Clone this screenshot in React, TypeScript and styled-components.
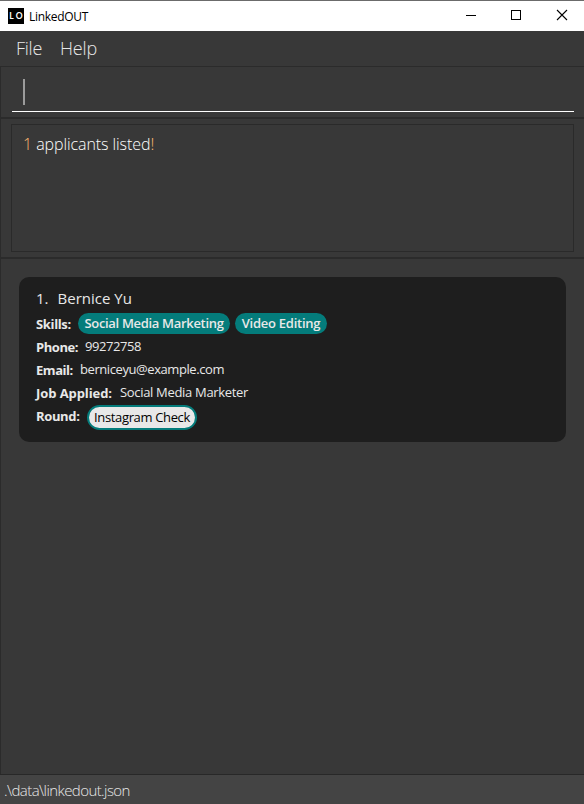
import React from "react";
import styled, { createGlobalStyle } from "styled-components";

const GlobalStyle = createGlobalStyle`
  * { box-sizing: border-box; }
  html, body { margin: 0; padding: 0; overflow: hidden; }
  body { background: #383838; font-family: "Open Sans", "Noto Sans", sans-serif; }
`;

const Window = styled.div`
  display: flex;
  flex-direction: column;
  width: 584px;
  height: 804px;
  background: #383838;
  color: #e8e8e8;
`;

const Label = styled.span<{ $size: number; $track?: number; $weight?: number }>`
  font-size: ${(p) => p.$size}px;
  font-weight: ${(p) => p.$weight ?? 400};
  letter-spacing: ${(p) => p.$track ?? 0}px;
  white-space: pre;
`;

const TitleBar = styled.header`
  display: flex;
  align-items: center;
  height: 31px;
  padding-left: 8px;
  border-top: 1px solid #6b6b6b;
  background: #fff;
  color: #000;
  flex: none;
`;

const Logo = styled.div`
  display: flex;
  align-items: center;
  justify-content: center;
  gap: 2px;
  width: 16px;
  height: 16px;
  margin: 0 5px 1px 0;
  background: #000;
  color: #fff;
  font: 700 8.5px/16px "Lato", sans-serif;
`;

const WindowButtons = styled.div`
  display: flex;
  margin-left: auto;
  svg { display: block; width: 46px; height: 30px; }
`;

const MenuBar = styled.nav`
  display: flex;
  gap: 18px;
  height: 35px;
  padding-left: 16px;
  line-height: 35px;
  flex: none;
`;

const Pane = styled.section<{ $height: number; $top: number }>`
  height: ${(p) => p.$height}px;
  border-left: 1px solid #2b2b2b;
  border-top: ${(p) => p.$top}px solid #2b2b2b;
  flex: none;
`;

const CommandField = styled.div`
  height: 36px;
  margin: 9px 10px 0 11px;
  padding: 3px 0 0 11px;
  border-bottom: 1px solid #fff;
`;

const Caret = styled.div`
  width: 2px;
  height: 26px;
  background: #9b9b9b;
`;

const ResultBox = styled.div`
  height: 128px;
  margin: 5px 10px 0 10px;
  padding: 8px 0 0 11px;
  border: 1px solid #2a2a2a;
  color: #fff;
  line-height: 22px;
`;

const Accent = styled.span`
  color: #ffb870;
`;

const Card = styled.article`
  height: 165px;
  margin: 18px 18px 0 18px;
  padding: 10px 0 0 17px;
  border-radius: 10px;
  background: #1e1e1e;
`;

const NameRow = styled.div`
  display: flex;
  gap: 9px;
  height: 25px;
  line-height: 22px;
`;

const Field = styled.div`
  display: flex;
  height: 23px;
  line-height: 23px;
`;

const FieldName = styled(Label)<{ $width: number }>`
  width: ${(p) => p.$width}px;
  padding-top: 1px;
`;

const Tag = styled.div<{ $width: number }>`
  display: flex;
  justify-content: center;
  width: ${(p) => p.$width}px;
  height: 21px;
  margin: 1px 5px 0 0;
  border-radius: 11px;
  background: #047c7b;
  line-height: 20px;
`;

const RoundTag = styled.div`
  display: flex;
  justify-content: center;
  width: 110px;
  height: 25px;
  margin-top: 1px;
  border: 2px solid #047c7b;
  border-radius: 13px;
  background: #e8e8e8;
  color: #000;
  line-height: 20px;
`;

const StatusBar = styled.footer`
  height: 30px;
  padding-left: 4px;
  border-top: 1px solid #282828;
  background: #444;
  line-height: 31px;
  flex: none;
`;

export default function App() {
  return (
    <>
      <GlobalStyle />
      <Window>
        <TitleBar>
          <Logo><span>L</span><span>O</span></Logo>
          <Label $size={12} $track={-0.3}>LinkedOUT</Label>
          <WindowButtons>
            <svg viewBox="0 0 46 30"><path d="M20 14.5h10" stroke="#000" /></svg>
            <svg viewBox="0 0 46 30"><rect x="19.5" y="9.5" width="9" height="9" fill="none" stroke="#000" /></svg>
            <svg viewBox="0 0 46 30"><path d="M19 9l10 10M29 9l-10 10" stroke="#000" strokeWidth="1.1" /></svg>
          </WindowButtons>
        </TitleBar>
        <MenuBar>
          <Label $size={18} $weight={300} $track={-0.25}>File</Label>
          <Label $size={18} $weight={300} $track={-0.15}>Help</Label>
        </MenuBar>
        <Pane $height={51} $top={1}>
          <CommandField><Caret /></CommandField>
        </Pane>
        <Pane $height={140} $top={2}>
          <ResultBox>
            <Label $size={16} $weight={300} $track={-0.08}><Accent>1</Accent> applicants listed<Accent>!</Accent></Label>
          </ResultBox>
        </Pane>
        <Pane $height={517} $top={2}>
          <Card>
            <NameRow>
              <Label $size={15}>1.</Label>
              <Label $size={15}>Bernice Yu</Label>
            </NameRow>
            <Field>
              <FieldName $width={42} $size={13} $weight={700} $track={-0.35}>Skills:</FieldName>
              <Tag $width={152}><Label $size={13} $weight={600} $track={-0.32}>Social Media Marketing</Label></Tag>
              <Tag $width={92}><Label $size={13} $weight={600} $track={-0.25}>Video Editing</Label></Tag>
            </Field>
            <Field>
              <FieldName $width={49} $size={13} $weight={700} $track={-0.45}>Phone:</FieldName>
              <Label $size={13} $track={-0.43}>99272758</Label>
            </Field>
            <Field>
              <FieldName $width={44} $size={13} $weight={700} $track={-0.45}>Email:</FieldName>
              <Label $size={13} $track={-0.42}>berniceyu@example.com</Label>
            </Field>
            <Field>
              <FieldName $width={84} $size={13} $weight={700} $track={-0.08}>Job Applied:</FieldName>
              <Label $size={13} $track={-0.32}>Social Media Marketer</Label>
            </Field>
            <Field>
              <FieldName $width={51} $size={13} $weight={700} $track={-0.35}>Round:</FieldName>
              <RoundTag><Label $size={13} $track={-0.35}>Instagram Check</Label></RoundTag>
            </Field>
          </Card>
        </Pane>
        <StatusBar>
          <Label $size={15} $weight={300} $track={-0.58}>.\data\linkedout.json</Label>
        </StatusBar>
      </Window>
    </>
  );
}
